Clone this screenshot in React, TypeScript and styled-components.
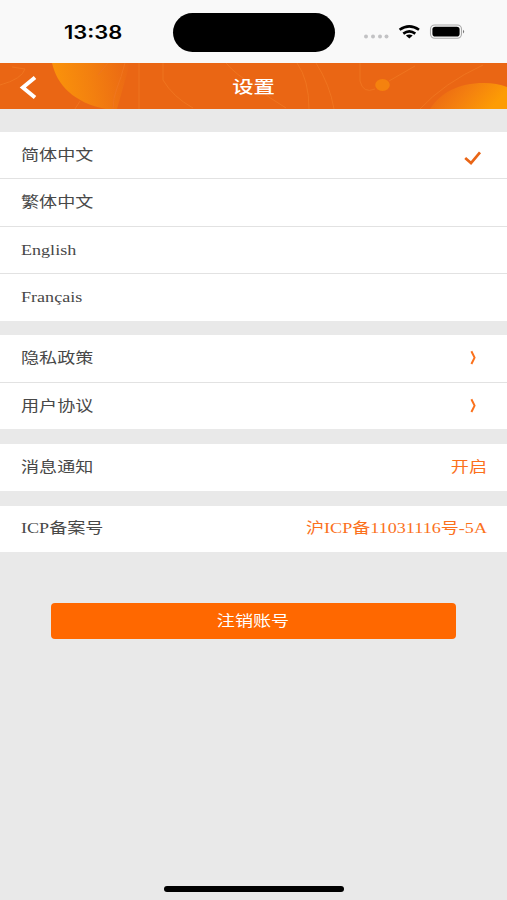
import React from "react";
import styled, { createGlobalStyle } from "styled-components";

const Global = createGlobalStyle`
  * { box-sizing: border-box; }
  body { margin: 0; background: #e9e9e9; }
`;

const Screen = styled.div`
  width: 507px;
  height: 900px;
  display: flex;
  flex-direction: column;
  background: #e9e9e9;
  overflow: hidden;
  font-family: "Liberation Serif", "Noto Sans CJK SC", serif;
`;

const StatusBar = styled.div`
  height: 63px;
  flex: none;
  display: grid;
  grid-template-columns: 173px 162px 1fr;
  align-items: center;
  background: #f9f9f9;
`;

const Clock = styled.div`
  padding: 2px 0 0 64px;
  font: 600 18px/24px Inter, "Liberation Sans", sans-serif;
  color: #000;
  span {
    display: inline-block;
    transform: scaleX(1.22);
    transform-origin: left center;
  }
`;

const Island = styled.div`
  height: 39px;
  margin-top: 1px;
  border-radius: 20px;
  background: #000;
`;

const StatusIcons = styled.svg`
  display: block;
  width: 172px;
  height: 63px;
`;

const Header = styled.header`
  height: 46px;
  flex: none;
  display: grid;
  grid-template: 46px / 507px;
  background: #ea6614;
`;

const HeaderArt = styled.svg`
  grid-area: 1 / 1;
  display: block;
  width: 507px;
  height: 46px;
`;

const Title = styled.h1`
  grid-area: 1 / 1;
  align-self: center;
  justify-self: center;
  margin: 0;
  font-size: 17.5px;
  line-height: 26px;
  font-weight: 500;
  font-family: "Noto Sans CJK SC", sans-serif;
  color: #fff;
  transform: scaleX(1.22);
`;

const Sections = styled.main`
  flex: 1;
  padding-top: 23px;
  display: flex;
  flex-direction: column;
`;

const Group = styled.section<{ $gap?: number }>`
  margin-bottom: ${(p) => p.$gap ?? 14}px;
  background: #fff;
`;

const Row = styled.div<{ $height: number; $lift?: number }>`
  height: ${(p) => p.$height}px;
  display: flex;
  align-items: center;
  justify-content: space-between;
  padding: 0 20px ${(p) => p.$lift ?? 2}px 20.5px;
  & + & {
    border-top: 1px solid #e2e2e2;
  }
`;

const Text = styled.span<{ $end?: boolean }>`
  display: inline-block;
  font-size: 15px;
  line-height: 22px;
  white-space: nowrap;
  color: ${(p) => (p.$end ? "#fb711c" : "#484848")};
  transform: scaleX(${(p) => (p.$end ? 1.207 : 1.205)});
  transform-origin: ${(p) => (p.$end ? "right" : "left")} center;
`;

const RowIcon = styled.svg<{ $drop?: number }>`
  display: block;
  width: 20px;
  height: 18px;
  margin: ${(p) => p.$drop ?? 0}px 4px 0 0;
`;

const Button = styled.button`
  width: 405px;
  height: 36px;
  margin: 37px 0 0 51px;
  padding: 0 0 2px;
  border: 0;
  border-radius: 4px;
  background: #ff6800;
  color: #fff;
  font-family: "Noto Sans CJK SC", sans-serif;
  font-size: 15px;
  line-height: 22px;
  span {
    display: inline-block;
    transform: scaleX(1.205);
  }
`;

const HomeBar = styled.div`
  width: 180px;
  height: 6px;
  flex: none;
  margin: 0 0 8px 164px;
  border-radius: 3px;
  background: #000;
`;

function Chevron() {
  return (
    <RowIcon viewBox="0 0 20 18">
      <path d="M8.4 2.2 L11.6 8.6 L8.4 15" fill="none" stroke="#fb711c" strokeWidth="2" strokeLinejoin="round" />
    </RowIcon>
  );
}

export default function App() {
  return (
    <Screen>
      <Global />
      <StatusBar>
        <Clock><span>13:38</span></Clock>
        <Island />
        <StatusIcons viewBox="335 0 172 63">
          <g fill="#c2c2c4">
            <circle cx="366" cy="36.5" r="2" />
            <circle cx="373" cy="36.5" r="2" />
            <circle cx="380" cy="36.5" r="2" />
            <circle cx="386.5" cy="36.5" r="2" />
          </g>
          <g fill="none" stroke="#000" strokeWidth="2.6">
            <path d="M399.6 29.8 Q409.3 22.8 419 29.8" />
            <path d="M403.3 33.6 Q409.3 29.1 415.3 33.6" />
          </g>
          <path d="M405.9 35.6 Q409.3 33.2 412.7 35.6 L409.3 38.4Z" />
          <rect x="430.5" y="25" width="31" height="13.3" rx="4.2" fill="none" stroke="#aaa" strokeWidth="1.1" />
          <rect x="432.4" y="26.8" width="27.2" height="9.8" rx="2.8" />
          <path d="M463 29.8 Q465.4 31.7 463 33.6Z" fill="#777" />
        </StatusIcons>
      </StatusBar>
      <Header>
        <HeaderArt viewBox="0 0 507 46">
          <defs>
            <linearGradient id="orb" x1="0" y1="0" x2="1" y2="-0.1">
              <stop offset="0" stopColor="#fa920b" />
              <stop offset="0.45" stopColor="#f3800f" />
              <stop offset="1" stopColor="#ea6614" />
            </linearGradient>
            <linearGradient id="hill" x1="0" y1="0" x2="1" y2="0.3">
              <stop offset="0.1" stopColor="#ea6614" />
              <stop offset="0.55" stopColor="#f4800f" />
              <stop offset="1" stopColor="#fd9c04" />
            </linearGradient>
          </defs>
          <path d="M52 0 C57 22 74 40 106 46 L117 46 L130 0Z" fill="url(#orb)" />
          <path d="M430 46 C440 30 458 20 484 20 Q497 20 507 24 V46Z" fill="url(#hill)" />
          <ellipse cx="382.5" cy="22" rx="7.3" ry="6" fill="#f5820e" />
          <g fill="none" stroke="#ef7620" strokeWidth="0.9">
            <path d="M0 22 Q22 16 25 6 L12 4" />
            <path d="M108 0 L98 12" />
            <path d="M125 0 Q121 15 117 25 T113 46" />
            <path d="M139 0 V46" />
            <path d="M163 0 V17 Q173 34 193 45" />
            <path d="M75 46 L80 38" />
            <path d="M226 0 Q236 12 254 22 Q270 36 286 45" />
            <path d="M297 0 Q309 17 309 46" />
            <path d="M316 0 Q330 22 334 46" />
            <path d="M360 0 V18 Q363 31 375 26" />
            <path d="M389 18 L415 3" />
            <path d="M420 46 Q444 20 483 2" />
          </g>
          <path d="M35 14.5 L22.8 24.5 L35 34.5" fill="none" stroke="#fff" strokeWidth="3.9" />
        </HeaderArt>
        <Title>设置</Title>
      </Header>
      <Sections>
        <Group>
          <Row $height={46} $lift={0}>
            <Text>简体中文</Text>
            <RowIcon viewBox="0 0 20 18" $drop={5}>
              <path d="M2.2 9 L8 14 L17 3.4" fill="none" stroke="#e96516" strokeWidth="2.7" />
            </RowIcon>
          </Row>
          <Row $height={48}><Text>繁体中文</Text></Row>
          <Row $height={47} $lift={1}><Text>English</Text></Row>
          <Row $height={48}><Text>Français</Text></Row>
        </Group>
        <Group $gap={15}>
          <Row $height={47}><Text>隐私政策</Text><Chevron /></Row>
          <Row $height={47} $lift={1}><Text>用户协议</Text><Chevron /></Row>
        </Group>
        <Group $gap={15}>
          <Row $height={47}><Text>消息通知</Text><Text $end>开启</Text></Row>
        </Group>
        <Group>
          <Row $height={46}><Text>ICP备案号</Text><Text $end>沪ICP备11031116号-5A</Text></Row>
        </Group>
        <Button><span>注销账号</span></Button>
      </Sections>
      <HomeBar />
    </Screen>
  );
}
